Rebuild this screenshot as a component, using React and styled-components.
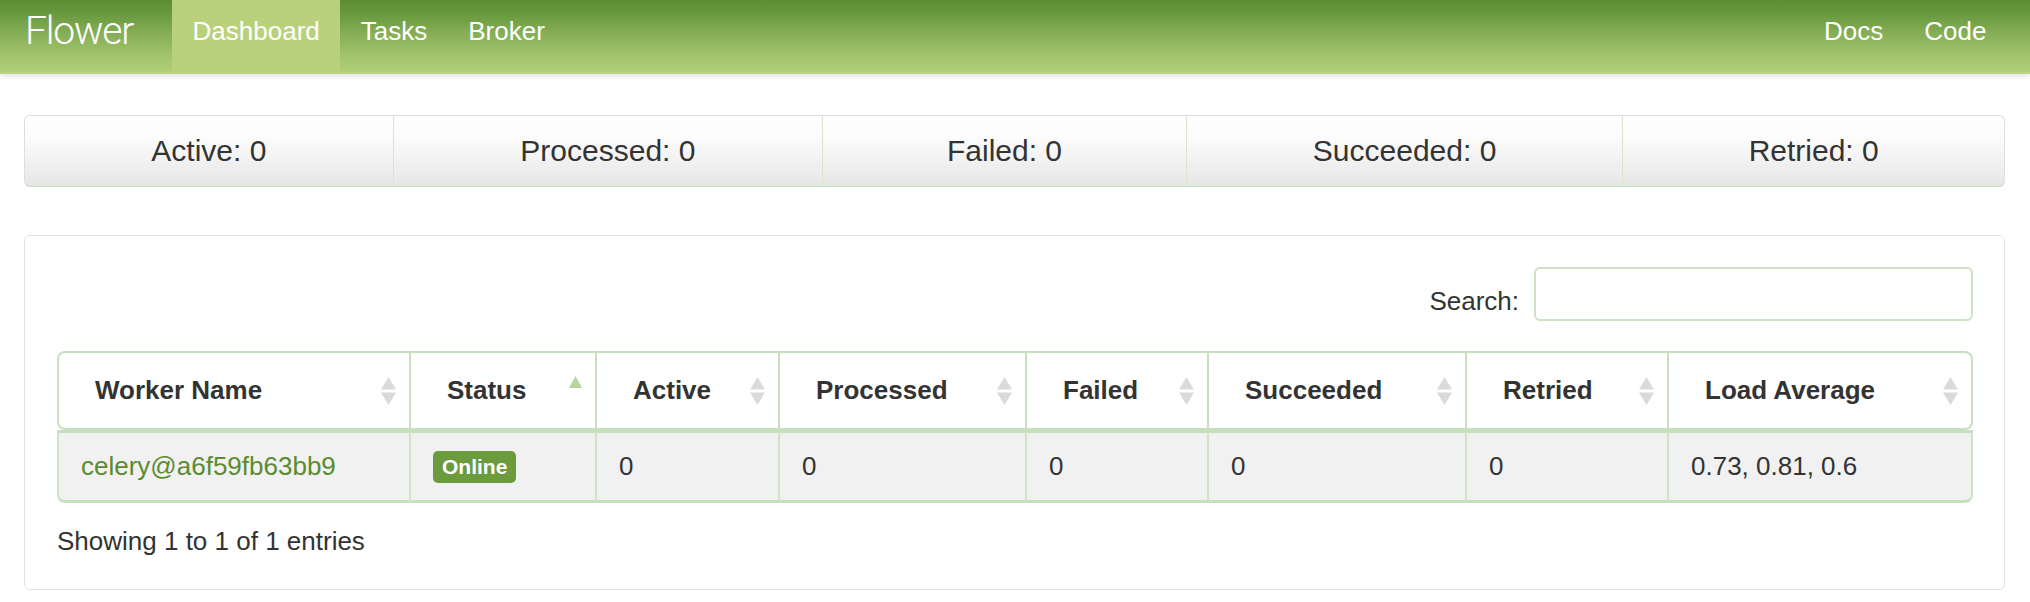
import React from 'react';
import styled, { createGlobalStyle } from 'styled-components';

const GlobalStyle = createGlobalStyle`
  html, body {
    margin: 0;
    padding: 0;
    background: #fff;
  }
  body {
    font-family: "Liberation Sans", Arial, Helvetica, sans-serif;
    font-size: 26px;
    color: #333;
  }
`;

const stats = [
  { label: 'Active', value: 0 },
  { label: 'Processed', value: 0 },
  { label: 'Failed', value: 0 },
  { label: 'Succeeded', value: 0 },
  { label: 'Retried', value: 0 },
];

const columns = [
  { label: 'Worker Name', width: 354 },
  { label: 'Status', width: 186, sorted: true },
  { label: 'Active', width: 183 },
  { label: 'Processed', width: 247 },
  { label: 'Failed', width: 182 },
  { label: 'Succeeded', width: 258 },
  { label: 'Retried', width: 202 },
  { label: 'Load Average' },
];

const workers = [
  {
    name: 'celery@a6f59fb63bb9',
    online: true,
    active: 0,
    processed: 0,
    failed: 0,
    succeeded: 0,
    retried: 0,
    load: '0.73, 0.81, 0.6',
  },
];

const SortIcon = ({ sorted }) =>
  sorted ? (
    <SortSvg width="13" height="12" viewBox="0 0 13 12" $sorted>
      <polygon points="6.5,0 13,12 0,12" fill="#b5d5a3" />
    </SortSvg>
  ) : (
    <SortSvg width="15" height="28" viewBox="0 0 15 28">
      <polygon points="7.5,0 15,12.5 0,12.5" fill="#dadada" />
      <polygon points="0,15.5 15,15.5 7.5,28" fill="#dadada" />
    </SortSvg>
  );

const App = () => {
  return (
    <>
      <GlobalStyle />
      <Navbar>
        <NavInner>
          <Brand>Flower</Brand>
          <NavLink active>Dashboard</NavLink>
          <NavLink>Tasks</NavLink>
          <NavLink>Broker</NavLink>
          <Spacer />
          <NavLink>Docs</NavLink>
          <NavLink>Code</NavLink>
        </NavInner>
      </Navbar>

      <Main>
        <StatsBar>
          {stats.map((s) => (
            <StatCell key={s.label}>
              {s.label}: {s.value}
            </StatCell>
          ))}
        </StatsBar>

        <Panel>
          <SearchRow>
            <SearchLabel>Search:</SearchLabel>
            <SearchInput type="text" />
          </SearchRow>

          <Table>
            <colgroup>
              {columns.map((c) => (
                <Col key={c.label} $w={c.width} />
              ))}
            </colgroup>
            <thead>
              <tr>
                {columns.map((c) => (
                  <HeadCell key={c.label}>
                    <HeadInner>
                      <span>{c.label}</span>
                      <SortIcon sorted={c.sorted} />
                    </HeadInner>
                  </HeadCell>
                ))}
              </tr>
            </thead>
            <tbody>
              {workers.map((w) => (
                <tr key={w.name}>
                  <Cell>
                    <WorkerLink>{w.name}</WorkerLink>
                  </Cell>
                  <Cell>{w.online && <Badge>Online</Badge>}</Cell>
                  <Cell>{w.active}</Cell>
                  <Cell>{w.processed}</Cell>
                  <Cell>{w.failed}</Cell>
                  <Cell>{w.succeeded}</Cell>
                  <Cell>{w.retried}</Cell>
                  <Cell>{w.load}</Cell>
                </tr>
              ))}
            </tbody>
          </Table>

          <Info>Showing 1 to 1 of 1 entries</Info>
        </Panel>
      </Main>
    </>
  );
};

export default App;

const Navbar = styled.header`
  height: 72px;
  background: linear-gradient(
    to bottom,
    #5b8e34 0%,
    #64963b 15%,
    #84ad55 45%,
    #a4c56e 80%,
    #b1cd79 100%
  );
  border-bottom: 2px solid #bad480;
  box-shadow: 0 2px 6px rgba(0, 0, 0, 0.13);
`;

const NavInner = styled.nav`
  display: flex;
  height: 100%;
  padding: 0 23px 0 24px;
`;

const Brand = styled.a`
  font-family: Roboto, "Liberation Sans", sans-serif;
  font-weight: 300;
  font-size: 39px;
  letter-spacing: -1.2px;
  color: #fff;
  line-height: 62px;
  padding: 0 39px 10px 1px;
`;

const NavLink = styled.a`
  color: #fff;
  font-size: 26px;
  line-height: 62px;
  padding: 0 20.5px 10px;
  background: ${({ active }) => (active ? '#b9d17b' : 'none')};
  cursor: pointer;
`;

const Spacer = styled.div`
  flex: 1;
`;

const Main = styled.main`
  padding: 41px 25px 0 24px;
`;

const StatsBar = styled.div`
  display: grid;
  grid-template-columns: 368fr 430fr 364fr 437fr 382fr;
  height: 72px;
  box-sizing: border-box;
  border: 1px solid #dedede;
  border-bottom-color: #c6dbb7;
  border-radius: 6px;
  background: linear-gradient(to bottom, #ffffff 0%, #fcfcfc 30%, #e6e6e6 100%);
  overflow: hidden;
`;

const StatCell = styled.div`
  display: flex;
  align-items: center;
  justify-content: center;
  font-size: 30px;
  color: #333;

  & + & {
    border-left: 1px solid #d8e5d1;
  }
`;

const Panel = styled.section`
  margin-top: 48px;
  border: 1px solid #e3e3e3;
  border-radius: 6px;
  background: #fefffe;
  padding: 31px 31px 30px 32px;
`;

const SearchRow = styled.div`
  display: flex;
  justify-content: flex-end;
  align-items: center;
  gap: 15px;
  margin-bottom: 30px;
`;

const SearchLabel = styled.label`
  font-size: 26px;
  line-height: 36px;
  margin-top: 14px;
`;

const SearchInput = styled.input`
  width: 439px;
  height: 54px;
  box-sizing: border-box;
  border: 2px solid #cfe2c6;
  border-radius: 6px;
  background: #fff;
  outline: none;
`;

const Table = styled.table`
  width: 100%;
  table-layout: fixed;
  border-collapse: separate;
  border-spacing: 0;
`;

const Col = styled.col`
  width: ${({ $w }) => ($w ? `${$w}px` : 'auto')};
`;

const HeadCell = styled.th`
  height: 75px;
  padding: 0 13px 0 36px;
  text-align: left;
  font-size: 26px;
  font-weight: bold;
  color: #333;
  background: #fefffe;
  border-top: 2px solid #c8dfbf;
  border-bottom: 2px solid #c8dfbf;
  border-right: 2px solid #c8dfbf;

  &:first-child {
    border-left: 2px solid #c8dfbf;
    border-top-left-radius: 8px;
    border-bottom-left-radius: 8px;
  }

  &:last-child {
    border-top-right-radius: 8px;
    border-bottom-right-radius: 8px;
  }
`;

const HeadInner = styled.div`
  display: flex;
  align-items: center;
  justify-content: space-between;
`;

const SortSvg = styled.svg`
  flex-shrink: 0;
  margin-bottom: ${({ $sorted }) => ($sorted ? '18px' : '0')};
`;

const Cell = styled.td`
  height: 67px;
  padding: 0 22px;
  font-size: 26px;
  color: #333;
  background: #f1f1f1;
  border-top: 3px solid #c8dfbf;
  border-bottom: 3px solid #c8dfbf;
  border-right: 2px solid #d0e3c7;

  &:first-child {
    border-left: 2px solid #d0e3c7;
    border-bottom-left-radius: 8px;
  }

  &:last-child {
    border-bottom-right-radius: 8px;
  }
`;

const WorkerLink = styled.a`
  color: #5a8c2f;
  cursor: pointer;
`;

const Badge = styled.span`
  display: inline-block;
  height: 32px;
  line-height: 32px;
  padding: 0 9px;
  border-radius: 5px;
  background: #6b9b3d;
  color: #fff;
  font-size: 21px;
  font-weight: bold;
  vertical-align: middle;
`;

const Info = styled.div`
  margin-top: 20px;
  font-size: 26px;
  line-height: 36px;
  color: #333;
`;
